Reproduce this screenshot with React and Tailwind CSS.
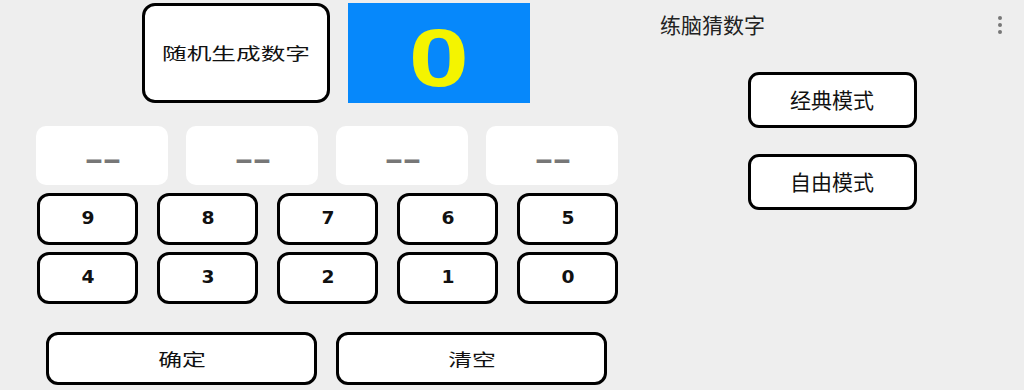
import React, { useState } from "react";

const cjk = { fontFamily: '"Noto Sans CJK SC", "Noto Sans", sans-serif' };

function App() {
  const [target] = useState(0);
  const [guess, setGuess] = useState(["--", "--", "--", "--"]);

  const keysTop = [9, 8, 7, 6, 5];
  const keysBottom = [4, 3, 2, 1, 0];

  const press = (n) => {
    const i = guess.indexOf("--");
    if (i === -1) return;
    const next = [...guess];
    next[i] = String(n);
    setGuess(next);
  };

  const Key = ({ n }) => (
    <button
      onClick={() => press(n)}
      className="w-[101px] h-[52px] bg-white border-[3px] border-black rounded-[12px] text-[17px] font-bold text-[#111]"
      style={{ fontFamily: '"DejaVu Sans", sans-serif' }}
    >
      <span className="inline-block scale-x-[1.1]">{n}</span>
    </button>
  );

  return (
    <div className="w-[1024px] h-[390px] bg-[#eeeeee] flex overflow-hidden" style={cjk}>
      {/* Left: game */}
      <div className="w-[640px] pl-[36px] pt-[3px] flex flex-col">
        <div className="ml-[106px] flex gap-[18px]">
          <button className="w-[188px] h-[100px] bg-white border-[3px] border-black rounded-[13px] text-[17px] text-[#111]">
            <span className="inline-block scale-x-[1.45]">随机生成数字</span>
          </button>
          <div className="w-[182px] h-[100px] bg-[#0688fb] flex items-center justify-center">
            <span
              className="inline-block text-[#f4f400] text-[82px] font-bold leading-none pt-[10px] scale-x-[1.32]"
              style={{ fontFamily: '"Liberation Sans", sans-serif' }}
            >
              {target}
            </span>
          </div>
        </div>

        <div className="mt-[23px] flex gap-[18px]">
          {guess.map((g, i) => (
            <div
              key={i}
              className="w-[132px] h-[59px] bg-white rounded-[10px] flex items-center justify-center pt-[8px] text-[24px] font-bold text-[#777777]"
              style={{ fontFamily: '"DejaVu Sans", sans-serif' }}
            >
              <span className="inline-block tracking-[-1px] scale-x-[2]">{g}</span>
            </div>
          ))}
        </div>

        <div className="mt-[8px] ml-[1px] flex gap-[19px]">
          {keysTop.map((n) => (
            <Key key={n} n={n} />
          ))}
        </div>
        <div className="mt-[7px] ml-[1px] flex gap-[19px]">
          {keysBottom.map((n) => (
            <Key key={n} n={n} />
          ))}
        </div>

        <div className="mt-[28px] ml-[10px] flex gap-[19px]">
          <button className="w-[271px] h-[53px] bg-white border-[3px] border-black rounded-[12px] text-[17px] text-[#111]">
            <span className="inline-block scale-x-[1.4]">确定</span>
          </button>
          <button
            onClick={() => setGuess(["--", "--", "--", "--"])}
            className="w-[271px] h-[53px] bg-white border-[3px] border-black rounded-[12px] text-[17px] text-[#111]"
          >
            <span className="inline-block scale-x-[1.4]">清空</span>
          </button>
        </div>
      </div>

      {/* Right: menu */}
      <div className="flex-1 flex flex-col">
        <div className="h-[50px] pl-[20px] pr-[22px] flex items-center justify-between">
          <span className="text-[21px] text-[#222]">练脑猜数字</span>
          <div className="flex flex-col gap-[3px] items-center">
            <span className="w-[4px] h-[4px] rounded-full bg-[#777]" />
            <span className="w-[4px] h-[4px] rounded-full bg-[#777]" />
            <span className="w-[4px] h-[4px] rounded-full bg-[#777]" />
          </div>
        </div>
        <div className="mt-[22px] flex flex-col items-center gap-[26px]">
          <button className="w-[169px] h-[56px] bg-white border-[3px] border-black rounded-[11px] text-[21px] text-[#111]">
            经典模式
          </button>
          <button className="w-[169px] h-[56px] bg-white border-[3px] border-black rounded-[11px] text-[21px] text-[#111]">
            自由模式
          </button>
        </div>
      </div>
    </div>
  );
}

export default App;
